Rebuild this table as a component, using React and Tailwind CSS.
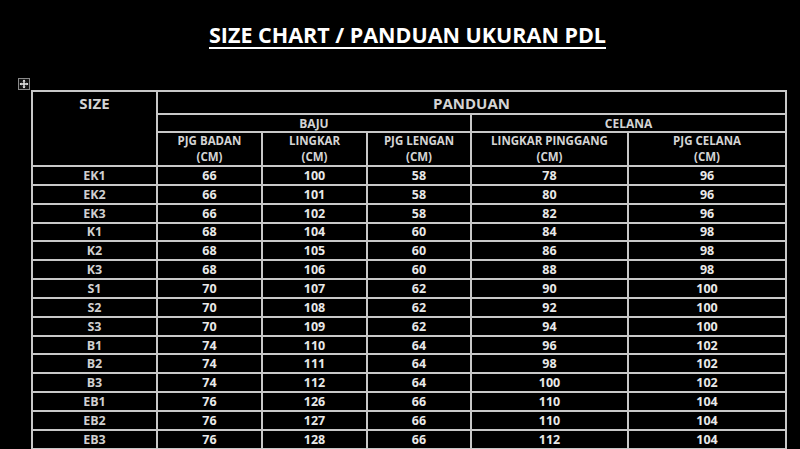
const rows = [
  ["EK1", "66", "100", "58", "78", "96"],
  ["EK2", "66", "101", "58", "80", "96"],
  ["EK3", "66", "102", "58", "82", "96"],
  ["K1", "68", "104", "60", "84", "98"],
  ["K2", "68", "105", "60", "86", "98"],
  ["K3", "68", "106", "60", "88", "98"],
  ["S1", "70", "107", "62", "90", "100"],
  ["S2", "70", "108", "62", "92", "100"],
  ["S3", "70", "109", "62", "94", "100"],
  ["B1", "74", "110", "64", "96", "102"],
  ["B2", "74", "111", "64", "98", "102"],
  ["B3", "74", "112", "64", "100", "102"],
  ["EB1", "76", "126", "66", "110", "104"],
  ["EB2", "76", "127", "66", "110", "104"],
  ["EB3", "76", "128", "66", "112", "104"],
]

const cell = "border-2 border-[#c8c8c8] p-0 text-center"

const MoveHandle = () => (
  <svg width="12" height="12" viewBox="0 0 12 12">
    <rect x="0.5" y="0.5" width="11" height="11" fill="#111" stroke="#8a8a8a" />
    <path d="M6 2v8M2 6h8" stroke="#e6e6e6" strokeWidth="1.4" />
    <path d="M6 1.6l-1.6 1.8h3.2zM6 10.4l-1.6-1.8h3.2zM1.6 6l1.8-1.6v3.2zM10.4 6l-1.8-1.6v3.2z" fill="#e6e6e6" />
  </svg>
)

export default function App() {
  return (
    <div className="w-[800px] h-[449px] bg-black overflow-hidden text-[#e9e9e9] font-['Open_Sans',sans-serif] font-bold">
      <div className="ml-[31px] w-[753px] pt-[22px] h-[78px] text-center">
        <h1 className="text-[21.5px] leading-[25px] text-white underline decoration-2 underline-offset-[4px]">
          SIZE CHART / PANDUAN UKURAN PDL
        </h1>
      </div>
      <div className="ml-[18px] h-[12px]">
        <MoveHandle />
      </div>
      <table className="ml-[31px] w-[754px] table-fixed border-collapse">
        <colgroup>
          <col className="w-[125px]" />
          <col className="w-[105px]" />
          <col className="w-[105px]" />
          <col className="w-[104px]" />
          <col className="w-[157px]" />
          <col className="w-[158px]" />
        </colgroup>
        <thead className="text-[#d4d4d4]">
          <tr className="h-[23px]">
            <th rowSpan={3} className={cell + " align-top pt-[1px] text-[15px] leading-[20px]"}>
              SIZE
            </th>
            <th colSpan={5} className={cell + " text-[15px] leading-[20px]"}>
              PANDUAN
            </th>
          </tr>
          <tr className="h-[18px]">
            <th colSpan={3} className={cell + " text-[12px] leading-[15px]"}>BAJU</th>
            <th colSpan={2} className={cell + " text-[12px] leading-[15px]"}>CELANA</th>
          </tr>
          <tr className="h-[34px] text-[11.5px] leading-[16px]">
            <th className={cell}>PJG BADAN<br />(CM)</th>
            <th className={cell}>LINGKAR<br />(CM)</th>
            <th className={cell}>PJG LENGAN<br />(CM)</th>
            <th className={cell}>LINGKAR PINGGANG<br />(CM)</th>
            <th className={cell}>PJG CELANA<br />(CM)</th>
          </tr>
        </thead>
        <tbody className="text-[12.5px] leading-[15px]">
          {rows.map((r) => (
            <tr key={r[0]} className="h-[18.85px]">
              {r.map((v, i) => (
                <td key={i} className={cell + (i === 0 ? " text-[#d0d0d0]" : "")}>
                  {v}
                </td>
              ))}
            </tr>
          ))}
        </tbody>
      </table>
    </div>
  )
}
